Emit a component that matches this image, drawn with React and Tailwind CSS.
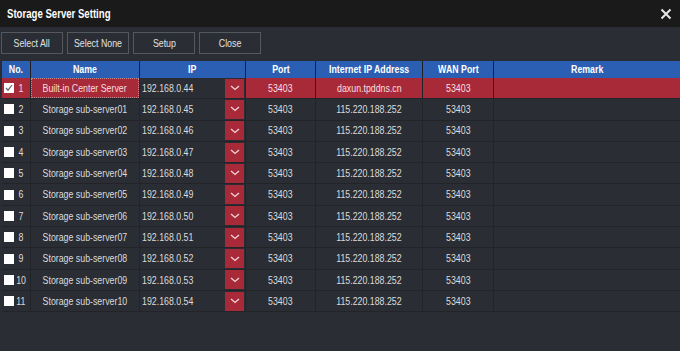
import { useState } from 'react'

const ROWS = [
  { name: 'Built-in Center Server', ip: '192.168.0.44', wan: 'daxun.tpddns.cn' },
  ...Array.from({ length: 10 }, (_, i) => ({
    name: `Storage sub-server${String(i + 1).padStart(2, '0')}`,
    ip: `192.168.0.${45 + i}`,
    wan: '115.220.188.252',
  })),
]

const COLS = 'grid grid-cols-[28px_108px_105px_69px_106px_70px_1fr] gap-x-px'

// the UI font is a narrow sans; squeeze Liberation Sans to match
function T({ children, left }) {
  return (
    <span className={`inline-block whitespace-nowrap scale-x-[0.8] ${left ? 'origin-left' : 'origin-center'}`}>
      {children}
    </span>
  )
}

function Chevron() {
  return (
    <svg width="10" height="6" viewBox="0 0 10 6" fill="none">
      <path d="M1 1l4 3.5L9 1" stroke="#f3d4d7" strokeWidth="1.3" />
    </svg>
  )
}

export default function App() {
  const [checked, setChecked] = useState(ROWS.map((_, i) => i === 0))

  return (
    <div
      className="w-[680px] h-[351px] bg-[#2a2d33] text-[11px] text-[#dcdcdc] overflow-hidden"
      style={{ fontFamily: '"Liberation Sans", Arial, sans-serif' }}
    >
      {/* title bar */}
      <div className="h-[27px] bg-[#1a1a1a] flex items-center justify-between pl-[7px] pr-[8px]">
        <span className="text-[12px] font-bold text-white"><T left>Storage Server Setting</T></span>
        <svg width="12" height="12" viewBox="0 0 12 12">
          <path d="M1.5 1.5l9 9M10.5 1.5l-9 9" stroke="#e6e6e6" strokeWidth="2" />
        </svg>
      </div>

      {/* toolbar */}
      <div className="flex gap-[4px] pl-px pt-[5px] h-[34px]">
        {['Select All', 'Select None', 'Setup', 'Close'].map(b => (
          <button
            key={b}
            className="w-[62px] h-[22px] border border-[#55585e] bg-[#2a2d33] text-[#e2e2e2] text-[11px] flex items-center justify-center"
          >
            <T>{b}</T>
          </button>
        ))}
      </div>

      {/* table */}
      <div className="pl-[2px]">
        <div className={`${COLS} h-[16px] bg-[#1e2024] font-bold text-white`}>
          {['No.', 'Name', 'IP', 'Port', 'Internet IP Address', 'WAN Port', 'Remark'].map(h => (
            <div key={h} className="bg-[#2b5fb4] flex items-center justify-center"><T>{h}</T></div>
          ))}
        </div>

        <div className="bg-[#222428] pt-px">
          {ROWS.map((r, i) => {
            const hot = i === 0
            const cell = hot ? 'bg-[#a82a38] text-[#f6dfe1]' : 'bg-[#2a2d33]'
            return (
              <div key={i} className={`${COLS} h-[21.3px] border-b border-[#222428]`}>
                <div className={`${cell} flex items-center pl-[2px]`}>
                  <button
                    onClick={() => setChecked(p => { const n = [...p]; n[i] = !n[i]; return n })}
                    className="w-[10px] h-[10px] bg-white flex items-center justify-center shrink-0"
                  >
                    {checked[i] && (
                      <svg width="8" height="8" viewBox="0 0 8 8">
                        <path d="M1 4l2 2.2L7 1" stroke="#666" strokeWidth="1.2" fill="none" />
                      </svg>
                    )}
                  </button>
                  <span className="flex-1 text-center pr-[2px]"><T>{i + 1}</T></span>
                </div>
                <div className={`${cell} flex items-center justify-center`}>
                  <div className={`w-full h-full flex items-center justify-center ${hot ? 'outline outline-1 outline-dotted outline-[#c98a90] -outline-offset-1' : ''}`}>
                    <T>{r.name}</T>
                  </div>
                </div>
                <div className="bg-[#2a2d33] flex items-center justify-between pl-[2px] pr-[1px] text-[#dcdcdc]">
                  <T left>{r.ip}</T>
                  <div className="w-[19px] h-[19px] bg-[#a82a38] flex items-center justify-center">
                    <Chevron />
                  </div>
                </div>
                <div className={`${cell} flex items-center justify-center`}><T>53403</T></div>
                <div className={`${cell} flex items-center justify-center`}><T>{r.wan}</T></div>
                <div className={`${cell} flex items-center justify-center`}><T>53403</T></div>
                <div className={cell} />
              </div>
            )
          })}
        </div>
      </div>
    </div>
  )
}
